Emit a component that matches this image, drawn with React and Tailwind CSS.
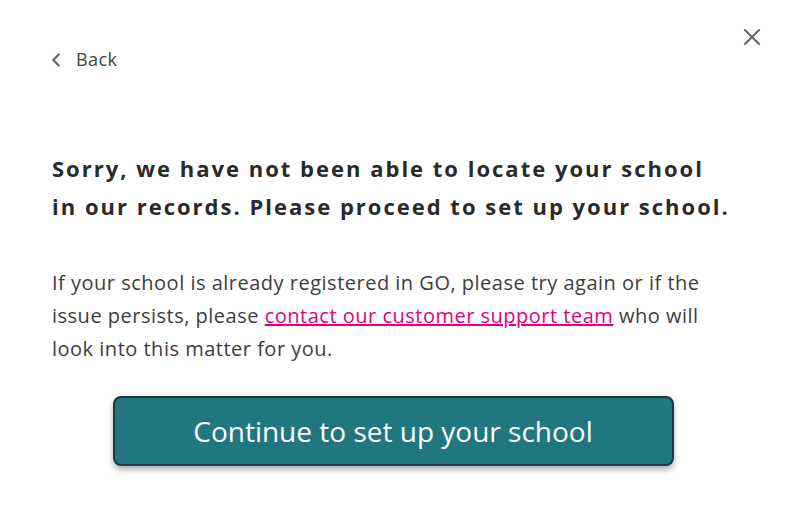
import { ChevronLeft, X } from 'lucide-react';

const App = () => {
  return (
    <div className="relative min-h-screen w-full bg-white" style={{ fontFamily: '"Open Sans", "Noto Sans", sans-serif' }}>
      <button className="absolute right-[25px] top-[23px] text-[#666]">
        <X className="h-[28px] w-[28px]" strokeWidth={1.8} />
      </button>

      <div className="px-[52px] pt-[46px]">
        <button className="-ml-[7px] flex items-center gap-[9px] text-[18px] tracking-[0.4px] text-[#444]">
          <ChevronLeft className="h-[22px] w-[22px] text-[#666]" strokeWidth={2.4} />
          Back
        </button>

        <h1 className="mt-[76px] whitespace-nowrap text-[22px] font-bold leading-[38px] tracking-[2px] text-[#2a2a2a]">
          Sorry, we have not been able to locate your school
          <br />
          in our records. Please proceed to set up your school.
        </h1>

        <p className="mt-[41px] max-w-[680px] text-[20px] leading-[33px] tracking-[0.5px] text-[#3d3d3d]">
          If your school is already registered in GO, please try again or if the issue persists, please{' '}
          <a href="#" className="text-[#e5007d] underline">contact our customer support team</a> who will look into this matter for you.
        </p>

        <div className="mt-[31px] flex justify-center">
          <button className="ml-[-5px] h-[70px] w-[561px] rounded-[8px] border-2 border-[#1a3a44] bg-[#20777f] text-[28px] text-white shadow-[0_4px_6px_rgba(0,0,0,0.3)]">
            Continue to set up your school
          </button>
        </div>
      </div>
    </div>
  );
};

export default App;
